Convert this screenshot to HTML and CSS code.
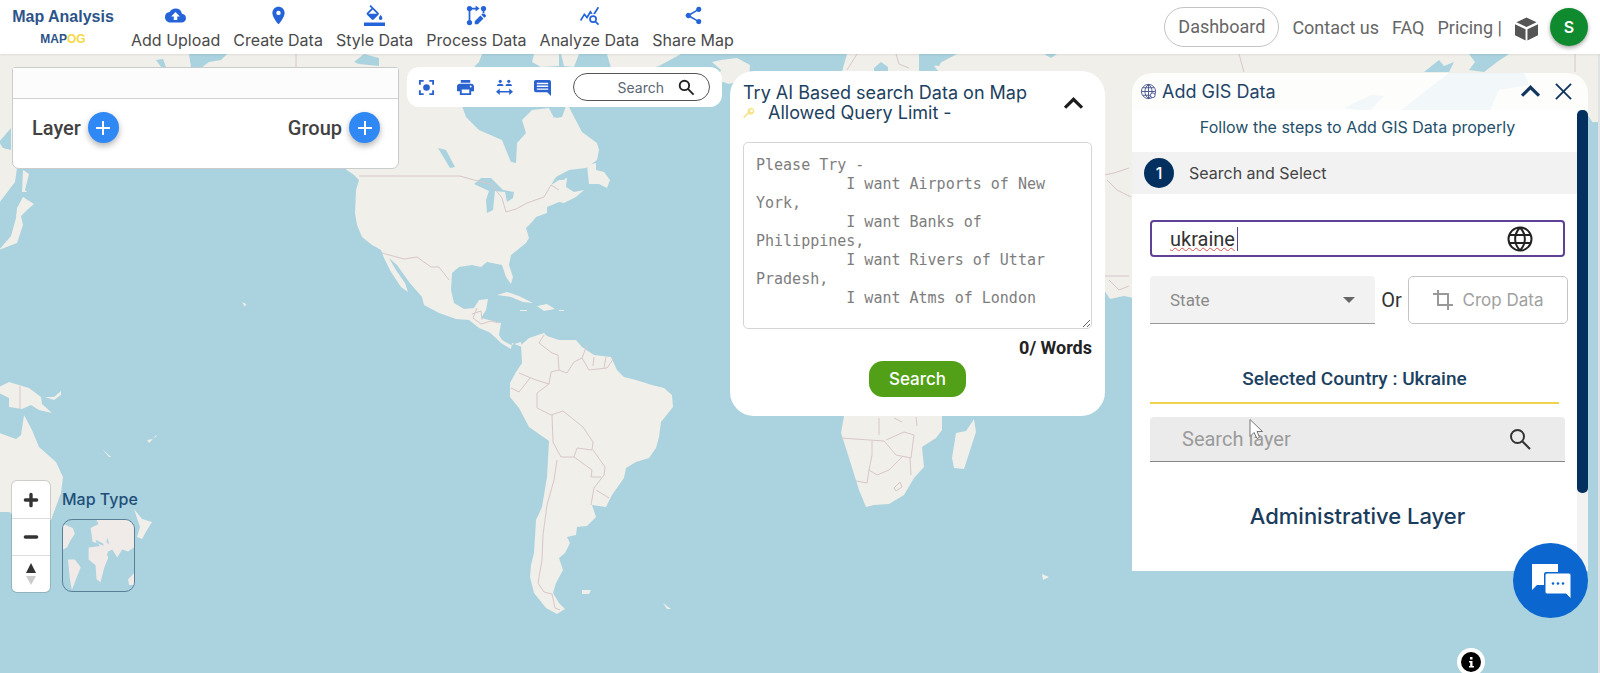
FILE: index.html
```html
<!DOCTYPE html>
<html lang="en">
<head>
<meta charset="utf-8">
<meta name="viewport" content="width=device-width, initial-scale=1">
<title>Map Analysis - MAPOG</title>
<link rel="stylesheet" href="styles.css">
</head>
<body>
<header class="topbar">
  <a class="brand" href="#">
    <span class="brand-title">Map Analysis</span>
    <span class="brand-sub">MAP<span class="brand-gold">OG</span></span>
  </a>
  <nav class="tools">
    <a class="tool" href="#"><svg viewBox="0 0 24 24"><path d="M19.35 10.04A7.49 7.49 0 0 0 12 4C9.11 4 6.6 5.64 5.35 8.04A5.99 5.99 0 0 0 0 14c0 3.31 2.69 6 6 6h13c2.76 0 5-2.24 5-5 0-2.64-2.05-4.78-4.65-4.96zM14 13v4h-4v-4H7l5-5 5 5h-3z"/></svg>Add Upload</a>
    <a class="tool" href="#"><svg viewBox="0 0 24 24"><path d="M12 2C8.13 2 5 5.13 5 9c0 5.25 7 13 7 13s7-7.75 7-13c0-3.87-3.13-7-7-7zm0 9.5a2.5 2.5 0 1 1 0-5 2.5 2.5 0 0 1 0 5z"/></svg>Create Data</a>
    <a class="tool" href="#"><svg viewBox="0 0 24 24"><path d="M16.56 8.94 7.62 0 6.21 1.41l2.38 2.38-5.15 5.15a1.49 1.49 0 0 0 0 2.12l5.5 5.5c.29.29.68.44 1.06.44s.77-.15 1.06-.44l5.5-5.5c.59-.58.59-1.53 0-2.12zM5.21 10 10 5.21 14.79 10H5.21zM19 11.500s-2 2.170-2 3.500c0 1.100.9 2 2 2s2-.9 2-2c0-1.330-2-3.500-2-3.500zM0 20h24v4H0z"/></svg>Style Data</a>
    <a class="tool" href="#"><svg viewBox="0 0 24 24"><circle cx="4" cy="4" r="3"/><circle cx="20" cy="4" r="3"/><circle cx="4" cy="20" r="3"/><path d="M3 6h2v12H3zM6 3h5V.500L15.500 4 11 7.500V5H6zM19 6h2v4h-2zM10 18.500V22h3.500l6.500-6.500-3.500-3.500zM22.700 13a1 1 0 0 0 0-1.300l-2.300-2.300a1 1 0 0 0-1.400 0l-1.500 1.600 3.500 3.500z"/></svg>Process Data</a>
    <a class="tool" href="#"><svg viewBox="0 0 24 24"><path d="M19.880 18.470c.44-.7.700-1.510.700-2.390a4.500 4.500 0 1 0-4.500 4.500c.88 0 1.690-.26 2.390-.7L21.580 23 23 21.580l-3.120-3.110zm-3.800.110a2.500 2.500 0 1 1 0-5 2.500 2.500 0 0 1 0 5zm-.36-8.500c-.74.020-1.450.180-2.100.450l-.55-.83-3.800 6.180-3.010-3.520-3.630 5.810L1 17l5-8 3 3.500L13 6l2.720 4.080zm2.590.500a6.100 6.100 0 0 0-2.070-.47L21.380 2 23 3.180l-4.690 7.400z"/></svg>Analyze Data</a>
    <a class="tool" href="#"><svg viewBox="0 0 24 24"><path d="M18 16.080c-.76 0-1.440.3-1.960.77L8.910 12.700a3 3 0 0 0 0-1.400l7.050-4.110A2.990 2.990 0 1 0 15 5c0 .24.040.47.090.7L8.040 9.810a3 3 0 1 0 0 4.380l7.120 4.160a2.900 2.900 0 1 0 2.840-2.270z"/></svg>Share Map</a>
  </nav>
  <nav class="links">
    <a class="pill" href="#">Dashboard</a>
    <a href="#">Contact us</a>
    <a href="#">FAQ</a>
    <a href="#">Pricing |</a>
  </nav>
  <svg class="cube" viewBox="0 0 24 24"><path d="M12 0 22.500 5 12 10 1.500 5zM0 7l11 5.200V24L0 18.500zM24 7l-11 5.200V24l11-5.500z"/></svg>
  <button class="avatar" type="button">S</button>
</header>

<main class="stage">
  <svg class="map" viewBox="0 54 1600 619" preserveAspectRatio="xMidYMid slice" aria-hidden="true">
    <g class="land">
      <path d="M0 54H483L480 62 470 72 462 103 467 117 480 130 503 140 507 150 512 162 517 163 518 143 527 133 523 120 533 110 550 108 557 118 563 117 568 103 573 113 583 132 598 143 600 150 598 160 587 168 570 170 557 177 552 185 560 178 568 178 567 187 575 192 585 190 577 197 565 203 560 202 548 207 548 213 537 217 533 222 527 228 530 238 527 243 512 255 510 265 514 277 512 284 507 277 503 265 488 262 482 267 473 265 460 267 453 273 452 290 455 303 465 309 475 308 480 300 489 299 487 310 482 318 490 320 502 323 500 335 503 340 512 345 522 342 523 347 513 343 512 349 502 343 497 338 490 332 480 328 470 320 457 319 440 313 425 305 423 297 410 282 398 265 390 258 397 270 406 283 409 292 402 287 392 272 385 258 382 250 373 245 363 237 358 225 356 213 357 190 360 180 355 175 345 168 340 150 300 120 200 100 100 120 18 168 16 182 0 203z"/>
      <path d="M522 345 530 338 545 333 548 336 560 340 577 340 583 347 595 355 612 357 618 370 625 377 637 380 653 385 665 388 673 395 674 407 662 422 660 437 657 448 650 458 637 462 627 468 625 478 613 495 607 507 593 505 597 517 588 526 578 527 577 535 568 537 571 543 566 553 560 558 564 570 557 583 554 593 560 603 566 609 558 614 547 608 535 593 531 577 532 565 535 553 537 520 543 507 548 477 550 441 540 434 530 427 520 408 511 397 511 383 517 372 523 363z"/>
      <path d="M847 405 842 433 850 458 860 490 867 507 875 505 890 504 905 495 915 478 925 467 923 447 937 438 943 430V405zM975 419 977 432 965 469 955 468 953 458 957 433 967 431z"/>
      <path d="M0 387 10 382 30 388 42 397 43 404 53 413 40 410 32 405 23 409 10 407 10 398 0 393zM0 433 17 439 22 435 25 415 33 430 40 447 57 462 64 477 62 493 52 520 35 528 10 512 0 512z"/>
      <path d="M135 509 143 519 153 522 148 530 143 539 138 537 141 527zM24 197 35 204 28 210 22 216 24 225 18 243 0 250 12 236 17 218 18 208zM24 170 30 174 26 190 28 192 23 192z"/>
      <path d="M535 54 533 62 542 67 560 66 560 54zM562 54 565 66 575 67 580 54zM608 54 612 68 640 72 660 66 682 54zM713 62 722 60 738 58 751 65 750 78 730 84 718 80 722 70z"/>
      <path d="M848 54 842 75 845 120H1105V290L1111 299 1125 296 1145 300V140L1600 122V54H958L935 66 940 72H920V54z"/>
      <path d="M498 295 508 292 520 296 534 303 524 302 512 297zM538 306 548 304 556 309 545 311zM521 310h7v1h-7zM560 310h5v1h-5zM588 165 597 163 597 170 605 172 611 180 608 188 600 184 590 184zM46 397 55 397 62 391 62 395 55 400zM103 449 112 457 110 457zM148 440 154 439 150 443zM154 438 158 435 157 437zM583 590 592 590 590 594 583 594zM664 603 672 609 668 609zM243 302 247 304 246 307zM1043 574 1050 577 1044 580z"/>
    </g>
    <path class="lake" d="M475 184 482 178 492 178 504 190 515 192 514 198 508 202 506 192 496 191 494 210 488 213 487 200 490 191zM157 60 164 59 167 67H162zM190 54 228 54 222 60 210 62 202 68 192 67zM355 62 365 54 380 58 380 66 360 64zM0 142 12 128V150L4 148zM439 148 447 150 456 167 451 168zM552 185 560 176 572 172 565 180 560 180zM875 68 882 62 889 67V75H875zM920 56 945 56 940 66 925 64zM1045 54H1058L1052 58zM1425 72 1440 60 1445 66 1455 62 1450 72zM1470 54 1510 54 1498 62 1485 72 1470 70 1476 62zM1345 108 1372 95 1385 96 1370 112zM1400 112 1425 92 1450 73 1525 73 1530 85 1500 90 1490 112zM540 90 548 88 566 105 555 118 550 108z"/>
    <path class="sea" d="M1588 114 1596 126 1600 133V300H1500V128z"/>
    <path class="border" d="M360 176H461L475 180 492 184 503 198 507 212 517 209 528 203 545 197 552 185 560 190M383 253 405 259 418 257 432 267 440 267 450 280M478 308 474 318 482 324 492 321 500 323M473 314 482 311 483 320M545 335 540 343 553 353 559 355 560 370 568 373 575 362 583 358 588 345M583 358 590 370 608 368 615 358M595 357 594 366M607 357 605 368M560 370 552 372 550 384 537 380 520 373M531 378 520 392 512 388M550 384 538 393 538 408 552 415 564 411 584 427 594 442 593 450 578 448 575 457 562 457 554 442 553 415M594 450 606 467 605 475 595 488 592 505M575 457 593 470 592 477 602 477M597 490 610 498M558 460 555 480 548 505 544 535 543 560 539 583 545 592 553 594 556 608 561 610M21 386V409M297 54V67M842 438 885 441 897 455 912 458 915 435 905 432 887 440M873 441V455L870 470 878 475 890 470 903 457M870 470 868 483 857 481M880 418V435M895 418 903 422M917 417 918 426M911 458 912 475M895 488 901 482 903 487 897 491zM848 70 858 54M897 54 900 64 910 68M1105 175 1115 173 1130 168M1108 180 1118 190 1132 197M1106 276H1130M1110 280 1120 290 1130 286M1240 54 1245 72M1576 54V72"/>
  </svg>

  <div class="panels">
    <section class="card layers">
      <div class="layers-head"></div>
      <div class="layers-row">
        <div class="adder">Layer <button class="add" type="button" aria-label="Add layer"><svg viewBox="0 0 16 16"><path d="M8 1v14M1 8h14"/></svg></button></div>
        <div class="adder">Group <button class="add" type="button" aria-label="Add group"><svg viewBox="0 0 16 16"><path d="M8 1v14M1 8h14"/></svg></button></div>
      </div>
    </section>

    <section class="maptools">
      <button class="icon" type="button" aria-label="Locate"><svg viewBox="0 0 18 18"><circle cx="9" cy="9" r="3.500"/><path class="line" d="M2 6V2h4M12 2h4v4M16 12v4h-4M6 16H2v-4"/></svg></button>
      <button class="icon" type="button" aria-label="Print"><svg viewBox="0 0 18 18"><path d="M4 1h10v3H4zM3 5h12c1.700 0 3 1.300 3 3v5h-3v4H3v-4H0V8c0-1.700 1.300-3 3-3zm2 6v4h8v-4zm9.500-4a1 1 0 1 0 0 2 1 1 0 0 0 0-2z"/></svg></button>
      <button class="icon" type="button" aria-label="Measure"><svg viewBox="0 0 18 18"><circle cx="4.500" cy="2.500" r="1.700"/><circle cx="13.500" cy="2.500" r="1.700"/><path d="M1 7.500c0-1.800 1.500-2.500 3.500-2.500S8 5.700 8 7.500zM10 7.500c0-1.800 1.500-2.500 3.500-2.500S17 5.700 17 7.500z"/><path d="M0 13.500 4 10v2.600h10V10l4 3.500-4 3.500v-2.600H4V17z"/></svg></button>
      <button class="icon" type="button" aria-label="Comments"><svg viewBox="0 0 18 18"><path fill-rule="evenodd" d="M2 1h14a2 2 0 0 1 2 2v15l-4-4H2a2 2 0 0 1-2-2V3a2 2 0 0 1 2-2zm1 3v1.500h12V4zm0 3v1.500h12V7zm0 3v1.500h12V10z"/></svg></button>
      <label class="place">
        <input type="text" placeholder="Search" aria-label="Search place">
        <svg viewBox="0 0 18 18"><circle cx="6.800" cy="6.800" r="5"/><path d="m10.500 10.500 6 6"/></svg>
      </label>
    </section>

    <section class="card ai">
      <div class="ai-head">
        <h2>Try AI Based search Data on Map<br><svg class="key" viewBox="0 0 14 14"><path d="M9 1a4 4 0 1 1-2.600 7L1.500 13 0 12l5.500-6A4 4 0 0 1 9 1zm1 2a1.500 1.500 0 1 0 0 3 1.500 1.500 0 0 0 0-3z"/></svg>Allowed Query Limit -</h2>
        <button class="plain" type="button" aria-label="Collapse"><svg class="chev" viewBox="0 0 18 12"><path d="m1 10 8-8 8 8"/></svg></button>
      </div>
      <textarea aria-label="Query" placeholder="Please Try -&#10;          I want Airports of New York,&#10;          I want Banks of Philippines,&#10;          I want Rivers of Uttar Pradesh,&#10;          I want Atms of London"></textarea>
      <p class="words">0/ Words</p>
      <button class="go" type="button">Search</button>
    </section>

    <section class="gis">
      <header class="gis-head">
        <svg class="globe-sm" viewBox="0 0 18 18"><circle cx="9" cy="9" r="7.500"/><path d="M1.500 9h15M3 5h12M3 13h12M9 1.500v15M9 1.500c-5 4-5 11 0 15M9 1.500c5 4 5 11 0 15"/><circle class="pin" cx="13.500" cy="13" r="2.500"/></svg>
        <h2>Add GIS Data</h2>
        <button class="plain" type="button" aria-label="Collapse"><svg class="chev" viewBox="0 0 18 12"><path d="m1 10 8-8 8 8"/></svg></button>
        <button class="plain" type="button" aria-label="Close"><svg class="close" viewBox="0 0 18 18"><path d="m1 1 16 16M17 1 1 17"/></svg></button>
      </header>
      <div class="gis-body">
        <div class="gis-content">
          <p class="hint">Follow the steps to Add GIS Data properly</p>
          <div class="step"><span class="num">1</span>Search and Select</div>
          <div class="form">
            <div class="country">
              <input type="text" value="ukraine" aria-label="Country">
              <span class="caret"></span>
              <svg viewBox="0 0 26 26"><circle cx="13" cy="13" r="11.500"/><path d="M2.500 9h21M2.500 17h21M13 1.500c-6.500 7-6.500 16 0 23M13 1.500c6.500 7 6.500 16 0 23"/></svg>
            </div>
            <div class="row">
              <div class="state">
                <select aria-label="State"><option>State</option></select>
                <svg viewBox="0 0 12 6"><path d="M0 0h12L6 6z"/></svg>
              </div>
              <span class="or">Or</span>
              <button class="crop" type="button"><svg viewBox="0 0 20 20"><path d="M0 4h15v12M5 0v15h15M15 16v4"/></svg>Crop Data</button>
            </div>
            <h3 class="selected">Selected Country : Ukraine</h3>
            <label class="layer-search">
              <input type="text" placeholder="Search layer" aria-label="Search layer">
              <svg viewBox="0 0 22 22"><circle cx="8.500" cy="8.500" r="6.500"/><path d="m13 13 8 8"/></svg>
              <svg class="cursor" viewBox="0 0 14 21"><path d="M1 1v17l4-4 3 6 2.500-1.200L8 13h5.500z"/></svg>
            </label>
            <h3 class="admin">Administrative Layer</h3>
          </div>
        </div>
        <div class="bar"><div class="thumb"></div></div>
      </div>
    </section>
  </div>

  <div class="corner">
    <div class="zoom">
      <button type="button" aria-label="Zoom in"><svg viewBox="0 0 16 16"><path class="thick" d="M8 3v10M3 8h10"/></svg></button>
      <button type="button" aria-label="Zoom out"><svg viewBox="0 0 16 16"><path class="thick" d="M3 8h10"/></svg></button>
      <button type="button" aria-label="Reset north"><svg class="needle" viewBox="0 0 12 22"><path d="M6 0l5 10H1z"/><path class="south" d="M6 22 1 13h10z"/></svg></button>
    </div>
    <div class="maptype">
      <span>Map Type</span>
      <button class="thumbmap" type="button" aria-label="Map type">
        <svg viewBox="0 0 72 72"><path d="M0 4 10 8 12 14 8 20 4 28 0 30zM5 40 12 40 18 48 14 58 9 71 7 60zM28 8 36 4 34 0H72V28L66 32 60 30 55 38 50 30 46 32 43 38 36 24 30 22zM26 28 40 26 46 38 42 48 38 63 34 60 33 46 26 40zM66 60 72 54V66H67z"/><path class="wet" d="M33 20 41 24 41 26 34 23zM45 18 47 25 44 22z"/></svg>
      </button>
    </div>
  </div>

  <button class="chat" type="button" aria-label="Chat"><svg viewBox="0 0 40 36"><path d="M1 1h26v8H15q-2 0-2 2v11H6l-5 5z"/><path d="M16 10h22q2 0 2 2v24l-5-5H16q-2 0-2-2V12q0-2 2-2z"/><circle cx="22" cy="20.500" r="1.300"/><circle cx="27" cy="20.500" r="1.300"/><circle cx="32" cy="20.500" r="1.300"/></svg></button>
  <button class="info" type="button" aria-label="Attribution"><svg viewBox="0 0 20 20"><circle cx="10" cy="10" r="10"/><path d="M9 5h2.500v2.500H9zM8 9h3.500v5H13v1.500H8V14h1.200v-3.500H8z"/></svg></button>
</main>
</body>
</html>
```
FILE: styles.css
```css
* { box-sizing: border-box; }
body {
  margin: 0;
  min-height: 100vh;
  display: flex;
  flex-direction: column;
  font-family: Inter, "Liberation Sans", sans-serif;
  font-size: 16px;
  color: #4a4a4a;
}
button, input, select, textarea { font: inherit; color: inherit; margin: 0; }
button { padding: 0; border: 0; background: none; cursor: pointer; }
a { color: inherit; text-decoration: none; }
h2, h3, p { margin: 0; font-weight: 400; }
svg { display: block; flex: none; }

/* top bar */
.topbar {
  height: 54px;
  display: flex;
  align-items: center;
  padding: 0 12px 0 13px;
  background: #fff;
  position: relative;
  z-index: 2;
  box-shadow: 0 1px 2px rgba(0, 0, 0, .08);
}
.brand {
  display: flex;
  flex-direction: column;
  align-items: center;
  width: 100px;
  color: #2d5488;
  font-family: "Liberation Sans", sans-serif;
  font-weight: 700;
  white-space: nowrap;
}
.brand-title { font-size: 16px; line-height: 24px; }
.brand-sub { font-size: 12px; line-height: 20px; }
.brand-gold { color: #f8d748; }
.tools { display: flex; gap: 13px; margin-left: 18px; }
.tool {
  display: flex;
  flex-direction: column;
  align-items: center;
  gap: 4px;
  line-height: 20px;
  white-space: nowrap;
}
.tool svg { width: 21px; height: 21px; fill: #2563d9; }
.links {
  display: flex;
  align-items: center;
  gap: 13px;
  margin-left: auto;
  font-family: Roboto, sans-serif;
  font-size: 18px;
  color: #666;
  white-space: nowrap;
}
.pill {
  padding: 0 13px;
  line-height: 38px;
  border: 1px solid #c4c4c4;
  border-radius: 20px;
}
.cube { width: 23px; height: 24px; margin: 3px 12px 0 13px; fill: #555; }
.avatar {
  width: 38px;
  height: 38px;
  border-radius: 50%;
  background: #0f8a2f;
  color: #fff;
  font-weight: 600;
  box-shadow: 0 2px 4px rgba(0, 0, 0, .35);
}

/* map */
.stage {
  flex: 1;
  position: relative;
  overflow: hidden;
  background: #aad2df;
  border-right: 2px solid #dfe3e4;
}
.map { position: absolute; inset: 0; width: 100%; height: 100%; }
.land { fill: #f0efe9; }
.lake, .sea { fill: #aad2df; }
.border { fill: none; stroke: #d9c6cb; stroke-width: 1; }

.panels {
  position: relative;
  display: grid;
  grid-template-columns: 387fr 315fr 375fr 11px 456fr;
  column-gap: 8px;
  align-items: start;
  padding: 13px 10px 0 12px;
}
.card { background: #fff; }

.layers { border: 1px solid #c9cccd; border-radius: 3px 3px 7px 7px; }
.layers-head { height: 31px; background: #fcfcfd; border-bottom: 1px solid #d2d2d2; }
.layers-row {
  display: flex;
  justify-content: space-between;
  padding: 13px 18px 25px 19px;
  font-family: Roboto, sans-serif;
  font-weight: 500;
  font-size: 20px;
  color: #424242;
}
.adder { display: flex; align-items: center; gap: 7px; }
.add {
  width: 31px;
  height: 31px;
  border-radius: 50%;
  background: #3088f4;
  display: grid;
  place-items: center;
  box-shadow: 0 3px 6px rgba(0, 0, 0, .3);
}
.add svg { width: 16px; height: 16px; fill: none; stroke: #fff; stroke-width: 2; }

.maptools {
  display: flex;
  align-items: center;
  justify-content: space-between;
  height: 40px;
  padding: 0 12px 0 11px;
  background: #fff;
  border-radius: 12px;
}
.icon svg { width: 17px; height: 17px; fill: #2a62cf; }
.icon .line { fill: none; stroke: #2a62cf; stroke-width: 2; }
.place {
  display: flex;
  align-items: center;
  width: 137px;
  height: 28px;
  padding: 0 14px 0 12px;
  border: 1px solid #555;
  border-radius: 14px;
}
.place input {
  flex: 1;
  min-width: 0;
  margin-right: 14px;
  padding: 0;
  border: 0;
  background: none;
  text-align: right;
  font-size: 14px;
}
.place input::placeholder { color: #5b6673; opacity: 1; }
.place svg { width: 17px; height: 17px; fill: none; stroke: #222; stroke-width: 2; }

.ai {
  display: flex;
  flex-direction: column;
  margin-top: 4px;
  padding: 12px 13px 19px;
  border-radius: 24px;
}
.ai-head { display: flex; justify-content: space-between; padding-right: 9px; }
.ai-head h2 { font-size: 18px; line-height: 20px; color: #1d4160; white-space: nowrap; }
.key { display: inline-block; width: 12px; height: 12px; margin-right: 13px; fill: #f5e48b; }
.plain { display: grid; place-items: center; }
.chev { width: 19px; height: 13px; fill: none; stroke: #1c1c1c; stroke-width: 3; }
.ai textarea {
  display: block;
  width: 100%;
  height: 187px;
  margin-top: 19px;
  padding: 13px 12px 12px;
  border: 1px solid #d5d5d5;
  border-radius: 5px;
  background: #fff;
  resize: vertical;
  font: 15px/19px "DejaVu Sans Mono", monospace;
}
.ai textarea::placeholder { color: #7d7d7d; opacity: 1; }
.words {
  margin-top: 9px;
  text-align: right;
  font-family: Roboto, sans-serif;
  font-weight: 700;
  font-size: 18px;
  line-height: 20px;
  color: #222;
}
.go {
  align-self: center;
  width: 97px;
  height: 36px;
  margin-top: 3px;
  border-radius: 14px;
  background: #52a017;
  color: #fff;
  font-size: 17px;
  font-weight: 500;
}

/* GIS panel */
.gis { grid-column: 5; margin-top: 6px; color: #333; }
.gis-head {
  display: flex;
  align-items: center;
  gap: 5px;
  height: 37px;
  padding: 0 16px 0 8px;
  background: rgba(255, 255, 255, .85);
  border-radius: 20px 20px 0 0;
  color: #1f4468;
}
.gis-head h2 { flex: 1; font-size: 18px; }
.gis-head .chev, .close { stroke: #12365f; }
.close { width: 17px; height: 17px; fill: none; stroke-width: 2; }
.gis-head .plain + .plain { margin-left: 10px; }
.globe-sm { width: 17px; height: 17px; fill: none; stroke: #4a5790; stroke-width: 1; }
.globe-sm .pin { fill: #fff; }
.gis-body { display: flex; background: #fff; }
.gis-content { flex: 1; min-width: 0; }
.hint { line-height: 20px; padding: 7px 0 15px 6px; text-align: center; color: #24506a; }
.step {
  display: flex;
  align-items: center;
  gap: 15px;
  height: 42px;
  padding-left: 12px;
  background: #f2f2f2;
  color: #444;
}
.num {
  width: 30px;
  height: 30px;
  border-radius: 50%;
  background: #03305f;
  color: #fff;
  font-weight: 500;
  line-height: 30px;
  text-align: center;
}
.form {
  display: flex;
  flex-direction: column;
  padding: 26px 12px 41px 18px;
  font-family: Roboto, sans-serif;
}
.country {
  position: relative;
  display: flex;
  align-items: center;
  height: 37px;
  padding: 0 30px 0 18px;
  border: 2px solid #5e4195;
  border-radius: 4px;
}
.country input {
  flex: 1;
  min-width: 0;
  padding: 0;
  border: 0;
  outline: 0;
  background: none;
  font-size: 20px;
  text-decoration: underline wavy #d9534f 1px;
}
.country svg { width: 26px; height: 26px; fill: none; stroke: #222; stroke-width: 2; }
.caret { position: absolute; left: 85px; top: 5px; width: 1px; height: 24px; background: #5e4195; }
.row { display: flex; align-items: center; margin-top: 19px; }
.state { position: relative; flex: 1; }
.state select {
  display: block;
  width: 100%;
  height: 48px;
  padding: 0 20px;
  border: 0;
  border-bottom: 1px solid #999;
  border-radius: 4px 4px 0 0;
  background: #f2f2f2;
  appearance: none;
  color: #8a8a8a;
  font-size: 17px;
}
.state svg { position: absolute; right: 20px; top: 21px; width: 12px; height: 6px; fill: #666; }
.or { width: 33px; text-align: center; font-size: 20px; color: #333; }
.crop {
  display: flex;
  align-items: center;
  justify-content: center;
  gap: 10px;
  width: 160px;
  height: 48px;
  margin-right: -3px;
  border: 1px solid #c4c4c4;
  border-radius: 5px;
  background: #fff;
  color: #a0a0a0;
  font-family: Inter, sans-serif;
  font-size: 17px;
}
.crop svg { width: 20px; height: 20px; fill: none; stroke: #999; stroke-width: 2; }
.selected {
  margin: 43px 6px 0 0;
  padding-bottom: 11px;
  border-bottom: 2px solid #f0d24e;
  text-align: center;
  font-weight: 500;
  font-size: 19px;
  line-height: 24px;
  color: #1c4262;
}
.layer-search {
  position: relative;
  display: flex;
  align-items: center;
  height: 45px;
  margin-top: 13px;
  padding: 0 34px 0 32px;
  background: #ebebeb;
  border-bottom: 1px solid #888;
  border-radius: 4px 4px 0 0;
}
.layer-search input { flex: 1; min-width: 0; padding: 0; border: 0; background: none; font-size: 20px; }
.layer-search input::placeholder { color: #9b9b9b; opacity: 1; }
.layer-search svg { width: 22px; height: 22px; fill: none; stroke: #333; stroke-width: 2; }
.layer-search .cursor { position: absolute; left: 99px; top: 1px; width: 14px; height: 22px; fill: #fff; stroke: #777; stroke-width: 1; }
.admin {
  margin-top: 40px;
  text-align: center;
  font-family: Inter, sans-serif;
  font-weight: 500;
  font-size: 22px;
  line-height: 28px;
  color: #1a3c5c;
}
.bar { width: 11px; background: #f2f2f2; }
.thumb { height: 83%; border-radius: 5px; background: #03305f; }

/* floating controls */
.corner { position: absolute; left: 12px; bottom: 81px; display: flex; align-items: flex-end; gap: 12px; }
.zoom { display: flex; flex-direction: column; width: 38px; border-radius: 5px; background: #fff; box-shadow: 0 0 0 1px rgba(0, 0, 0, .14); }
.zoom button { height: 37px; display: grid; place-items: center; }
.zoom button + button { border-top: 1px solid #ddd; }
.zoom svg { width: 18px; height: 18px; }
.zoom .thick { stroke: #333; stroke-width: 3; stroke-linecap: round; }
.zoom .needle { width: 12px; height: 22px; fill: #333; }
.zoom .south { fill: #ccc; }
.maptype { display: flex; flex-direction: column; gap: 10px; font-weight: 500; line-height: 20px; color: #1f4f78; }
.thumbmap { width: 73px; height: 73px; overflow: hidden; border: 1px solid #5b7f96; border-radius: 10px; background: #aad2df; }
.thumbmap svg { width: 100%; height: 100%; fill: #f0ebe8; }
.thumbmap .wet { fill: #aad2df; }
.chat {
  position: absolute;
  right: 10px;
  bottom: 55px;
  width: 75px;
  height: 75px;
  border-radius: 50%;
  background: #0b66cf;
  display: grid;
  place-items: center;
}
.chat svg { width: 40px; height: 36px; fill: #fff; }
.chat circle { fill: #0b66cf; }
.chat path + path { stroke: #0b66cf; stroke-width: 1; }
.info { position: absolute; right: 113px; bottom: -3px; width: 28px; height: 28px; border-radius: 50%; background: #fff; display: grid; place-items: center; }
.info svg { width: 20px; height: 20px; }
.info path { fill: #fff; }
```
